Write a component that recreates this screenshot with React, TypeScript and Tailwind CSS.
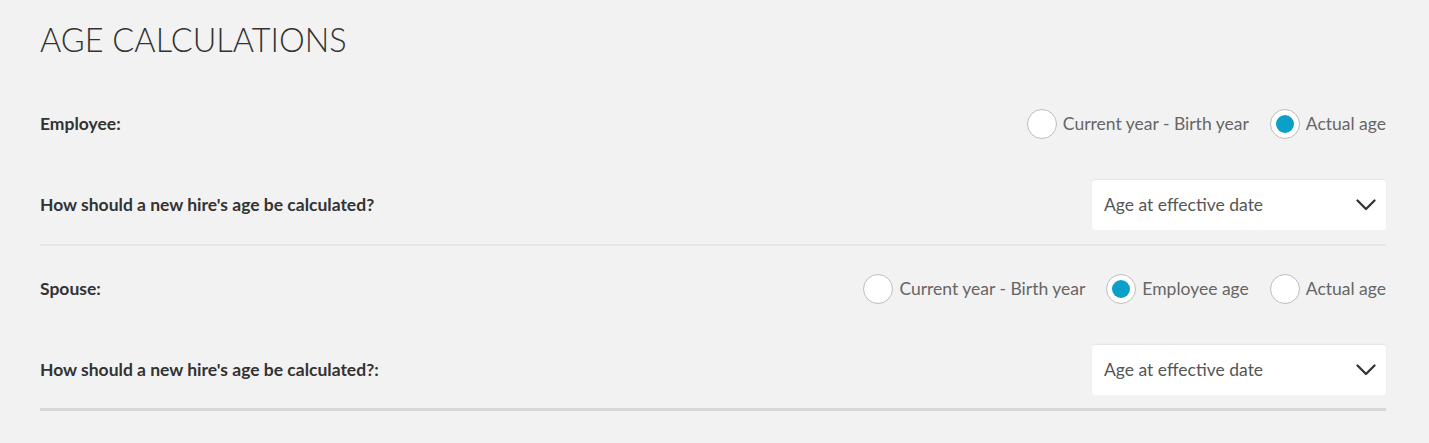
import React from "react";

const font = { fontFamily: "Lato, 'Noto Sans', sans-serif" };

function Radio({ label, checked }: { label: string; checked?: boolean }) {
  return (
    <label className="flex items-center gap-[6px] cursor-pointer">
      <span className="flex h-[30px] w-[30px] items-center justify-center rounded-full border border-[#bdbdbd] bg-white">
        {checked && <span className="h-[18px] w-[18px] rounded-full bg-[#0aa0c8]" />}
      </span>
      <span className="text-[17.5px] text-[#666666]">{label}</span>
    </label>
  );
}

function Select() {
  return (
    <div className="flex h-[50px] w-[294px] items-center justify-between rounded-[3px] bg-white pl-[12px] pr-[10px] shadow-[0_-1px_2px_rgba(0,0,0,0.06)]">
      <span className="text-[17.5px] text-[#555555]">Age at effective date</span>
      <svg width="20" height="12" viewBox="0 0 20 12" fill="none">
        <path d="M1.5 1.5 L10 10 L18.5 1.5" stroke="#333" strokeWidth="2.3" strokeLinecap="round" strokeLinejoin="round" />
      </svg>
    </div>
  );
}

export default function App() {
  return (
    <div className="min-h-[443px] w-full bg-[#f2f2f2] pl-[40px] pr-[43px]" style={font}>
      <h1 className="pt-[20px] text-[32.5px] font-light leading-[40px] text-[#333333]">
        AGE CALCULATIONS
      </h1>
      <div className="border-b-2 border-[#e5e5e5] pb-[14px]">
        <div className="mt-[39px] flex h-[50px] items-center justify-between">
          <span className="text-[17.5px] font-bold text-[#333333]">Employee:</span>
          <div className="flex items-center gap-[21px]">
            <Radio label="Current year - Birth year" />
            <Radio label="Actual age" checked />
          </div>
        </div>
        <div className="mt-[31px] flex items-center justify-between">
          <span className="text-[17.5px] font-bold text-[#333333]">How should a new hire's age be calculated?</span>
          <Select />
        </div>
      </div>
      <div className="border-b-[3px] border-[#d7d7d7] pb-[13px]">
        <div className="mt-[18px] flex h-[50px] items-center justify-between">
          <span className="text-[17.5px] font-bold text-[#333333]">Spouse:</span>
          <div className="flex items-center gap-[21px]">
            <Radio label="Current year - Birth year" />
            <Radio label="Employee age" checked />
            <Radio label="Actual age" />
          </div>
        </div>
        <div className="mt-[31px] flex items-center justify-between">
          <span className="text-[17.5px] font-bold text-[#333333]">How should a new hire's age be calculated?:</span>
          <Select />
        </div>
      </div>
    </div>
  );
}
